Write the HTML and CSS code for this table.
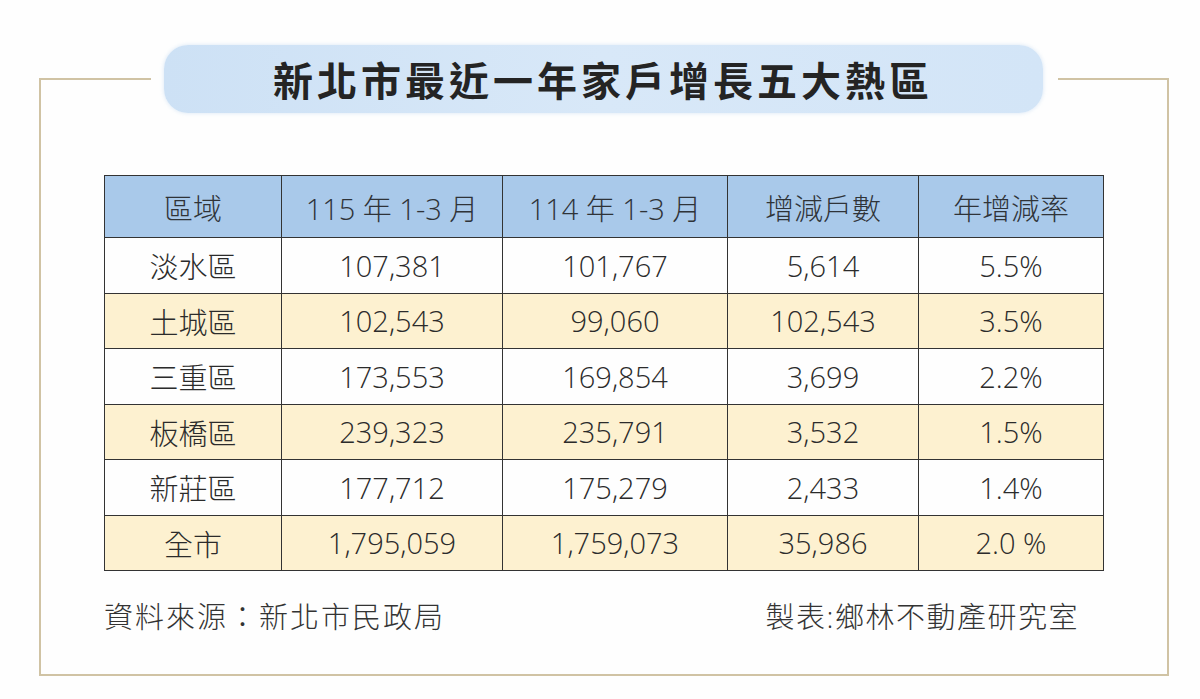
FILE: index.html
```html
<!DOCTYPE html>
<html lang="zh-Hant">
<head>
<meta charset="utf-8">
<title>新北市最近一年家戶增長五大熱區</title>
<link rel="stylesheet" href="styles.css">
</head>
<body>
<div class="page">
  <div class="frame">
    <div class="head">
      <span class="seg"></span>
      <h1 class="pill">新北市最近一年家戶增長五大熱區</h1>
      <span class="seg seg-r"></span>
    </div>
    <table class="data">
      <colgroup>
        <col class="c1"><col class="c2"><col class="c3"><col class="c4"><col class="c5">
      </colgroup>
      <thead>
        <tr><th>區域</th><th>115 年 1-3 月</th><th>114 年 1-3 月</th><th>增減戶數</th><th>年增減率</th></tr>
      </thead>
      <tbody>
        <tr><td>淡水區</td><td>107,381</td><td>101,767</td><td>5,614</td><td>5.5%</td></tr>
        <tr class="alt"><td>土城區</td><td>102,543</td><td>99,060</td><td>102,543</td><td>3.5%</td></tr>
        <tr><td>三重區</td><td>173,553</td><td>169,854</td><td>3,699</td><td>2.2%</td></tr>
        <tr class="alt"><td>板橋區</td><td>239,323</td><td>235,791</td><td>3,532</td><td>1.5%</td></tr>
        <tr><td>新莊區</td><td>177,712</td><td>175,279</td><td>2,433</td><td>1.4%</td></tr>
        <tr class="alt"><td>全市</td><td>1,795,059</td><td>1,759,073</td><td>35,986</td><td>2.0 %</td></tr>
      </tbody>
    </table>
    <div class="foot">
      <span class="src">資料來源：新北市民政局</span>
      <span class="maker">製表:鄉林不動產研究室</span>
    </div>
  </div>
</div>
</body>
</html>
```

FILE: styles.css
```css
* { box-sizing: border-box; }
html, body { margin: 0; padding: 0; background: #fefefe; }
body {
  font-family: "Open Sans", "Noto Sans CJK TC", sans-serif;
  color: #2b2b2b;
}
.page {
  width: 1200px;
  height: 699px;
  padding-top: 80px;
}
.frame {
  display: flow-root;
  margin-left: 39px;
  width: 1130px;
  border: 2px solid #d0c3a4;
  border-top: none;
  padding-bottom: 39px;
}
.head {
  display: flex;
  align-items: center;
  margin: -35px -2px 0 -2px;
  height: 68px;
}
.seg {
  flex: 1;
  height: 2px;
  background: #d0c3a4;
  align-self: center;
  margin-top: -1px;
}
.pill {
  margin: 0 15px 0 13px;
  width: 879px;
  height: 68px;
  border-radius: 24px;
  background: linear-gradient(90deg, #cde1f5 0%, #d8e8f8 50%, #d3e5f7 100%);
  box-shadow: 0 0 4px rgba(190, 215, 240, 0.6);
  font-family: "Noto Sans CJK TC", sans-serif;
  font-weight: 700;
  font-size: 40px;
  letter-spacing: 4px;
  color: #242424;
  display: flex;
  align-items: center;
  justify-content: center;
  padding-left: 0;
}
.data {
  margin: 62px 0 0 63px;
  width: 999px;
  border-collapse: collapse;
  table-layout: fixed;
  font-size: 29px;
}
.c1 { width: 177px; }
.c2 { width: 221px; }
.c3 { width: 225px; }
.c4 { width: 191px; }
.c5 { width: 185px; }
.data th, .data td {
  border: 1.5px solid #333;
  text-align: center;
  font-weight: 300;
  padding: 0;
  white-space: nowrap;
}
.data th {
  background: #a9c9ea;
  height: 62px;
  color: #2f3338;
}
.data td {
  height: 55.5px;
}
.data tr.alt td { background: #fdf1d0; }
.foot {
  display: flex;
  justify-content: space-between;
  align-items: center;
  margin: 28px 88px 0 63px;
  font-size: 29px;
  line-height: 36px;
  font-weight: 300;
  color: #333;
}
.src { letter-spacing: 2px; }
.maker { letter-spacing: 1.5px; }
```
